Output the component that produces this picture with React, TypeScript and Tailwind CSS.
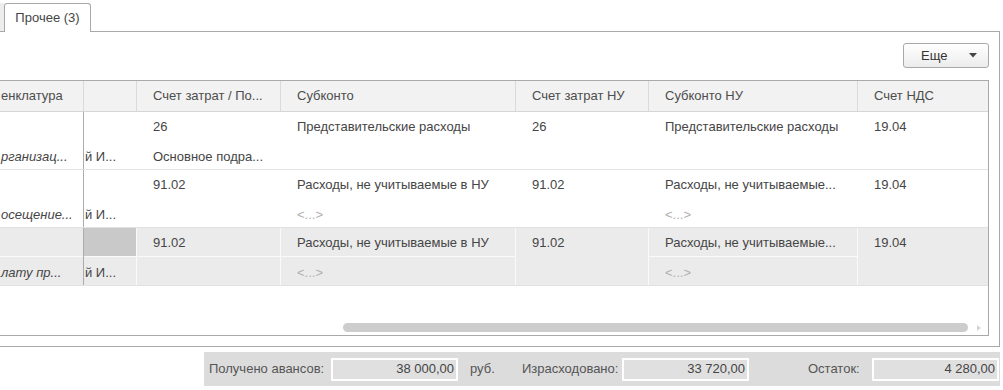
import React from "react";

const W = [
  "w-[84px]",
  "w-[53px]",
  "w-[144px]",
  "w-[235px]",
  "w-[133px]",
  "w-[209px]",
  "w-[130px]",
];

type Cell = { top?: React.ReactNode; bottom?: React.ReactNode; split?: boolean };

const Empty = () => <span className="text-[#b0b0b0]">&lt;...&gt;</span>;

const rows: { selected?: boolean; cells: Cell[] }[] = [
  {
    cells: [
      { bottom: "рганизац..." },
      { bottom: "й И..." },
      { top: "26", bottom: "Основное подра..." },
      { top: "Представительские расходы" },
      { top: "26" },
      { top: "Представительские расходы" },
      { top: "19.04" },
    ],
  },
  {
    cells: [
      { bottom: "осещение..." },
      { bottom: "й И..." },
      { top: "91.02" },
      { top: "Расходы, не учитываемые в НУ", bottom: <Empty /> },
      { top: "91.02" },
      { top: "Расходы, не учитываемые...", bottom: <Empty /> },
      { top: "19.04" },
    ],
  },
  {
    selected: true,
    cells: [
      { bottom: "лату пр...", split: true },
      { bottom: "й И...", split: true },
      { top: "91.02", split: true },
      { top: "Расходы, не учитываемые в НУ", bottom: <Empty />, split: true },
      { top: "91.02" },
      { top: "Расходы, не учитываемые...", bottom: <Empty />, split: true },
      { top: "19.04" },
    ],
  },
];

function Row({ selected, cells }: { selected?: boolean; cells: Cell[] }) {
  return (
    <div
      className={
        "flex h-[58px] border-b border-[#e2e2e2] " +
        (selected ? "bg-[#ebebeb]" : "bg-white")
      }
    >
      {cells.map((c, i) => {
        const last = i === cells.length - 1;
        const borderCls =
          i === 0
            ? "border-r border-[#acacac]"
            : last
            ? ""
            : selected
            ? "border-r border-[#fafafa]"
            : "border-r border-transparent";
        const lineCls = selected && c.split ? "bg-[#fafafa]" : "bg-transparent";
        const topBg = selected && i === 1 ? "bg-[#c9c9c9]" : "";
        if (i === 0) {
          return (
            <div key={i} className={"flex flex-col shrink-0 " + W[i] + " " + borderCls}>
              <div className="h-[28px]" />
              <div className={"h-[1px] " + lineCls} />
              <div className="h-[28px] flex items-center pt-[3px] pl-[1px] whitespace-nowrap italic">
                {c.bottom}
              </div>
            </div>
          );
        }
        if (i === 1) {
          return (
            <div key={i} className={"flex flex-col shrink-0 " + W[i] + " " + borderCls}>
              <div className={"h-[28px] " + topBg} />
              <div className={"h-[1px] " + lineCls} />
              <div className="h-[28px] flex items-center pt-[3px] pl-[1px] whitespace-nowrap">
                {c.bottom}
              </div>
            </div>
          );
        }
        return (
          <div key={i} className={"flex flex-col shrink-0 " + W[i] + " " + borderCls}>
            <div className="h-[28px] flex items-center pt-[1px] pl-[16px] whitespace-nowrap">
              {c.top}
            </div>
            <div className={"h-[1px] " + lineCls} />
            <div className="h-[28px] flex items-center pt-[3px] pl-[16px] whitespace-nowrap">
              {c.bottom}
            </div>
          </div>
        );
      })}
    </div>
  );
}

const headers = [
  "енклатура",
  "",
  "Счет затрат / По...",
  "Субконто",
  "Счет затрат НУ",
  "Субконто НУ",
  "Счет НДС",
];

export default function App() {
  return (
    <div className="w-[1003px] h-[390px] bg-white overflow-hidden font-['Liberation_Sans',Arial,sans-serif] text-[13px] text-[#454545]">
      {/* Tabs */}
      <div className="flex w-[1000px] h-[32px]">
        <div className="w-[4px] mt-[3px] bg-[#ededed] border-b border-[#a9a9a9]" />
        <div className="w-[87px] mt-[3px] border border-b-0 border-[#a9a9a9] rounded-t-[3px] bg-white flex items-center justify-center pb-[1px]">
          Прочее (3)
        </div>
        <div className="flex-1 border-b border-[#a9a9a9]" />
      </div>

      {/* Panel */}
      <div className="w-[1000px] h-[315px] border-r border-b border-[#a9a9a9] pt-[11px] pr-[10px] pb-[10px] flex flex-col">
        <div className="flex justify-end">
          <button className="w-[86px] h-[25px] border border-[#a9a9a9] rounded-[3px] bg-gradient-to-b from-white to-[#ececec] flex items-center pl-[17px] pr-[11px] text-[#333]">
            <span>Еще</span>
            <svg className="ml-auto" width="8" height="5" viewBox="0 0 8 5">
              <path d="M0 0 H8 L4 4.5 Z" fill="#444" />
            </svg>
          </button>
        </div>

        {/* Table */}
        <div className="mt-[12px] h-[256px] border-t border-r border-b border-[#a9a9a9] flex flex-col">
          <div className="flex h-[31px] bg-[#f2f2f2] border-b border-[#d6d6d6] text-[#4d4d4d]">
            {headers.map((h, i) => {
              const last = i === headers.length - 1;
              return (
                <div
                  key={i}
                  className={
                    "shrink-0 h-full flex items-center whitespace-nowrap " +
                    W[i] +
                    (last ? "" : " border-r border-[#dadada]") +
                    (i === 0 ? " pl-[1px]" : " pl-[16px]")
                  }
                >
                  {h}
                </div>
              );
            })}
          </div>
          {rows.map((r, i) => (
            <Row key={i} selected={r.selected} cells={r.cells} />
          ))}
          <div className="flex-1" />
          <div className="flex items-center h-[9px] mb-[3px]">
            <div className="ml-[343px] w-[625px] h-[9px] rounded-full bg-[#cdcdcd]" />
            <svg className="ml-[9px]" width="4" height="6" viewBox="0 0 4 6">
              <path d="M0 0 L4 3 L0 6 Z" fill="#d6d6d6" />
            </svg>
          </div>
        </div>
      </div>

      {/* Footer totals */}
      <div className="w-[1000px] flex justify-end mt-[5px]">
        <div className="w-[796px] h-[34px] bg-[#dcdcdc] flex items-center pl-[5px] text-[#555]">
          <div className="w-[122px] whitespace-nowrap">Получено авансов:</div>
          <div className="w-[127px] h-[23px] border-2 border-white bg-[#e0e0e0] flex items-center justify-end pr-[2px] text-[#444]">
            38 000,00
          </div>
          <div className="ml-[12px] w-[52px]">руб.</div>
          <div className="w-[100px] whitespace-nowrap">Израсходовано:</div>
          <div className="w-[127px] h-[23px] border-2 border-white bg-[#e0e0e0] flex items-center justify-end pr-[2px] text-[#444]">
            33 720,00
          </div>
          <div className="ml-[59px] w-[64px]">Остаток:</div>
          <div className="w-[127px] h-[23px] border-2 border-white bg-[#e0e0e0] flex items-center justify-end pr-[2px] text-[#444]">
            4 280,00
          </div>
        </div>
      </div>
    </div>
  );
}
